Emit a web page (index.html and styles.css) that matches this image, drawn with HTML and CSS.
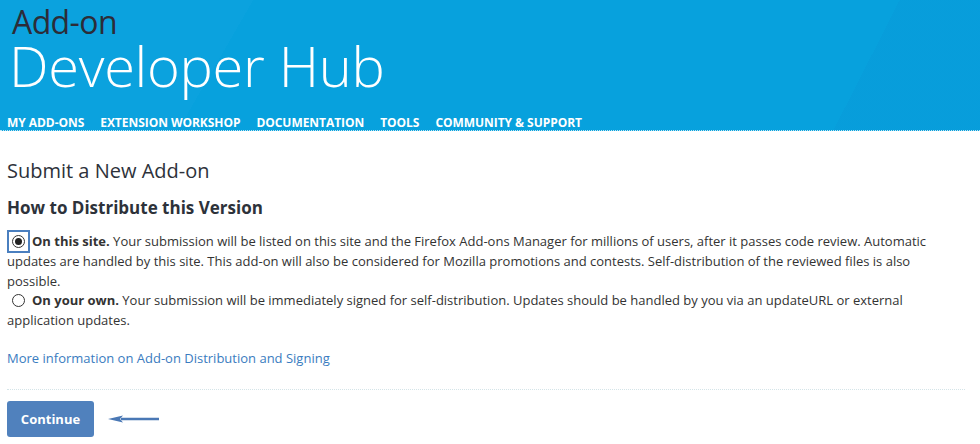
FILE: index.html
```html
<!DOCTYPE html>
<html>
<head>
<meta charset="utf-8">
<link rel="stylesheet" href="styles.css">
</head>
<body>
<header class="hub-header">
  <div class="brand">
    <div class="brand-small">Add-on</div>
    <div class="brand-big">Developer Hub</div>
  </div>
  <nav class="main-nav">
    <a>MY ADD-ONS</a>
    <a>EXTENSION WORKSHOP</a>
    <a>DOCUMENTATION</a>
    <a>TOOLS</a>
    <a>COMMUNITY &amp; SUPPORT</a>
  </nav>
</header>
<main class="content">
  <h1 class="page-title">Submit a New Add-on</h1>
  <h2 class="section-title">How to Distribute this Version</h2>
  <div class="options">
    <label class="option">
      <span class="radio-wrap focused"><span class="radio checked"></span></span><strong>On this site.</strong> Your submission will be listed on this site and the Firefox Add-ons Manager for millions of users, after it passes code review. Automatic updates are handled by this site. This add-on will also be considered for Mozilla promotions and contests. Self-distribution of the reviewed files is also possible.
    </label>
    <label class="option">
      <span class="radio-wrap"><span class="radio"></span></span><strong>On your own.</strong> Your submission will be immediately signed for self-distribution. Updates should be handled by you via an updateURL or external application updates.
    </label>
  </div>
  <p class="more"><a>More information on Add-on Distribution and Signing</a></p>
  <div class="actions">
    <button class="btn">Continue</button>
    <svg class="arrow" width="54" height="12" viewBox="0 0 54 12"><path d="M14 6 H52" stroke="#4a78b5" stroke-width="2.5" fill="none"/><path d="M1 6 L16 2.5 L13 6 L16 9.5 Z" fill="#4a78b5"/></svg>
  </div>
</main>
</body>
</html>
```
FILE: styles.css
```css
* { box-sizing: border-box; }
html, body { margin: 0; padding: 0; background: #fff; }
body {
  font-family: "Open Sans", "DejaVu Sans", sans-serif;
  color: #333;
}
.hub-header {
  height: 131px;
  background:
    linear-gradient(117deg, transparent 0, transparent 86%, rgba(20,120,190,0.08) 86%),
    linear-gradient(120deg, rgba(255,255,255,0.015) 0, rgba(255,255,255,0.015) 24%, transparent 24%),
    #07a1dd;
  border-bottom: 1px dotted #bfe6f5;
  display: flex;
  flex-direction: column;
  padding: 0 8px 0 7px;
}
.brand { padding-top: 5px; }
.brand-small {
  font-size: 32px;
  font-weight: 400;
  color: #2c2c38;
  line-height: 34px;
  padding-left: 5px;
  letter-spacing: -0.6px;
}
.brand-big {
  font-size: 56px;
  font-weight: 300;
  color: #fff;
  line-height: 52px;
  padding-left: 2px;
  letter-spacing: -0.3px;
}
.main-nav {
  margin-top: auto;
  display: flex;
  gap: 16px;
  padding-bottom: 0;
}
.main-nav a {
  color: #fff;
  font-size: 12px;
  font-weight: 700;
  line-height: 15px;
  letter-spacing: -0.05px;
}
.content {
  padding: 0 15px 0 7px;
}
.page-title {
  margin: 26px 0 0;
  font-size: 20px;
  font-weight: 400;
  color: #2d323a;
  line-height: 28px;
}
.section-title {
  margin: 11px 0 0;
  font-size: 17px;
  font-weight: 700;
  color: #2d323a;
  line-height: 24px;
}
.options {
  margin-top: 12px;
  max-width: 941px;
}
.option {
  display: block;
  font-size: 13px;
  line-height: 19.75px;
  color: #333;
}
.option strong { font-weight: 700; }
.radio-wrap {
  display: inline-flex;
  align-items: center;
  justify-content: center;
  width: 23px;
  height: 23px;
  vertical-align: middle;
  margin: -5px 2px -5px 0;
  border: 2px solid transparent;
  position: relative;
  top: -1px;
}
.radio-wrap.focused { border-color: #4a7fbf; }
.radio {
  width: 13px;
  height: 13px;
  border: 1px solid #333;
  border-radius: 50%;
  background: #fff;
  position: relative;
}
.radio.checked::after {
  content: "";
  position: absolute;
  left: 2px;
  top: 2px;
  width: 7px;
  height: 7px;
  border-radius: 50%;
  background: #222;
}
.more {
  margin: 18px 0 0;
  font-size: 13px;
  line-height: 19px;
}
.more a { color: #3a7cc0; }
.actions {
  margin-top: 21px;
  border-top: 1px dotted #d4e4e8;
  padding-top: 11px;
  display: flex;
  align-items: center;
  gap: 13px;
}
.btn {
  width: 87px;
  height: 36px;
  border: none;
  border-radius: 3px;
  background: #5081bd;
  color: #fff;
  font-family: "Open Sans", sans-serif;
  font-weight: 700;
  font-size: 13px;
  padding: 0;
}
.arrow { display: block; }
```
